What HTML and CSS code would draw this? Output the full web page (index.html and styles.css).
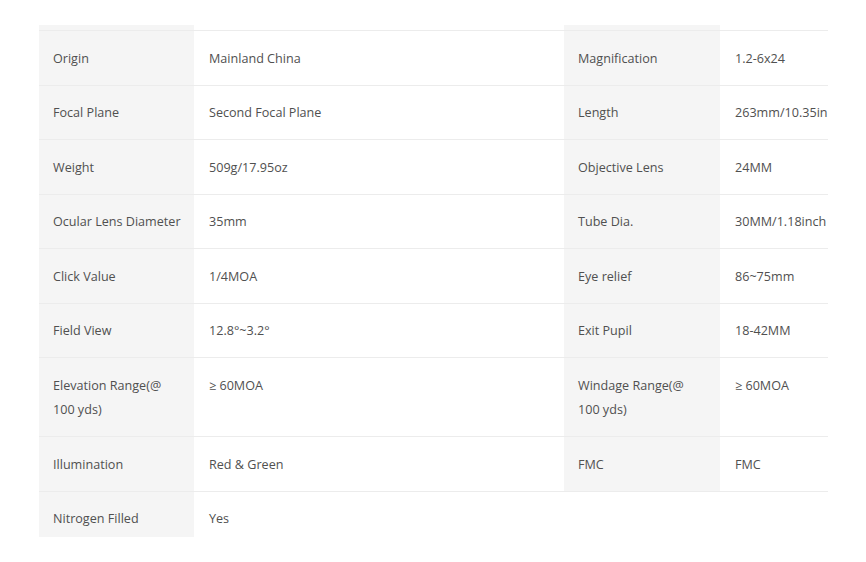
FILE: index.html
```html
<!DOCTYPE html>
<html>
<head>
<meta charset="utf-8">
<link rel="stylesheet" href="styles.css">
</head>
<body>
<div class="spec-wrap">
  <table class="spec">
    <colgroup>
      <col class="c-label"><col class="c-value"><col class="c-label2"><col class="c-value2">
    </colgroup>
    <tbody>
      <tr class="spacer"><td class="lbl"></td><td></td><td class="lbl"></td><td></td></tr>
      <tr><td class="lbl">Origin</td><td>Mainland China</td><td class="lbl">Magnification</td><td>1.2-6x24</td></tr>
      <tr><td class="lbl">Focal Plane</td><td>Second Focal Plane</td><td class="lbl">Length</td><td>263mm/10.35in</td></tr>
      <tr><td class="lbl">Weight</td><td>509g/17.95oz</td><td class="lbl">Objective Lens</td><td>24MM</td></tr>
      <tr><td class="lbl">Ocular Lens Diameter</td><td>35mm</td><td class="lbl">Tube Dia.</td><td>30MM/1.18inch</td></tr>
      <tr><td class="lbl">Click Value</td><td>1/4MOA</td><td class="lbl">Eye relief</td><td>86~75mm</td></tr>
      <tr><td class="lbl">Field View</td><td>12.8°~3.2°</td><td class="lbl">Exit Pupil</td><td>18-42MM</td></tr>
      <tr><td class="lbl">Elevation Range(@<br>100 yds)</td><td>≥ 60MOA</td><td class="lbl">Windage Range(@<br>100 yds)</td><td>≥ 60MOA</td></tr>
      <tr><td class="lbl">Illumination</td><td>Red &amp; Green</td><td class="lbl">FMC</td><td>FMC</td></tr>
      <tr><td class="lbl">Nitrogen Filled</td><td>Yes</td><td></td><td></td></tr>
    </tbody>
  </table>
</div>
</body>
</html>
```
FILE: styles.css
```css
html, body {
  margin: 0;
  padding: 0;
  background: #ffffff;
}
.spec-wrap {
  margin: 25px 0 0 39px;
  width: 789px;
  height: 512px;
  overflow: hidden;
}
.spec {
  border-collapse: collapse;
  table-layout: fixed;
  width: 789px;
  font-family: "Open Sans", "Liberation Sans", sans-serif;
  font-size: 12.6px;
  line-height: 24.5px;
  color: #505050;
}
.c-label { width: 155px; }
.c-value { width: 370px; }
.c-label2 { width: 156px; }
.c-value2 { width: 108px; }
.spec td {
  border-top: 1px solid #ececec;
  padding: 15.5px 0 13.5px 15px;
  vertical-align: top;
  white-space: nowrap;
  overflow: visible;
}
.spec td.lbl {
  background: #f5f5f5;
  padding-left: 14px;
}
.spec tr.spacer td {
  border-top: none;
  padding: 0;
  height: 5px;
  line-height: 0;
}
```
